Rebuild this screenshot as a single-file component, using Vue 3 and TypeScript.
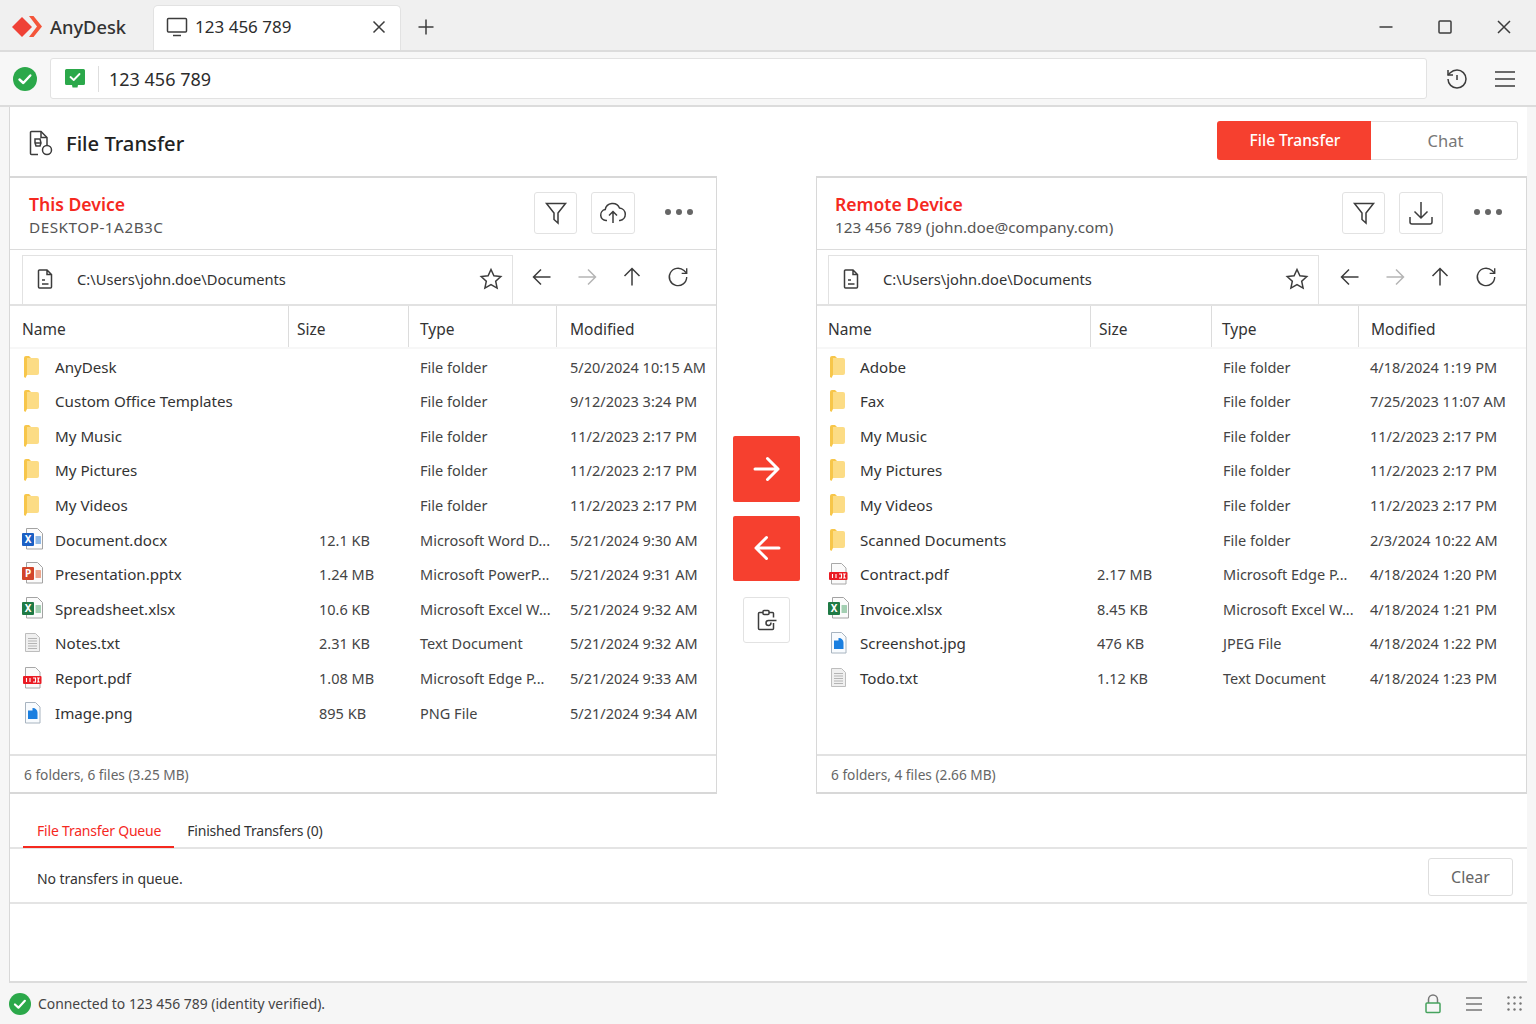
<script setup lang="ts">
type Kind = 'folder' | 'word' | 'ppt' | 'excel' | 'txt' | 'pdf' | 'image'

interface FileRow {
  name: string
  size: string
  type: string
  modified: string
  kind: Kind
}

interface Panel {
  id: string
  title: string
  sub: string
  action: 'upload' | 'download'
  summary: string
  rows: FileRow[]
}

const folder = (name: string, modified: string): FileRow => ({
  name,
  size: '',
  type: 'File folder',
  modified,
  kind: 'folder',
})

const panels: Panel[] = [
  {
    id: 'local',
    title: 'This Device',
    sub: 'DESKTOP-1A2B3C',
    action: 'upload',
    summary: '6 folders, 6 files (3.25 MB)',
    rows: [
      folder('AnyDesk', '5/20/2024 10:15 AM'),
      folder('Custom Office Templates', '9/12/2023 3:24 PM'),
      folder('My Music', '11/2/2023 2:17 PM'),
      folder('My Pictures', '11/2/2023 2:17 PM'),
      folder('My Videos', '11/2/2023 2:17 PM'),
      { name: 'Document.docx', size: '12.1 KB', type: 'Microsoft Word D...', modified: '5/21/2024 9:30 AM', kind: 'word' },
      { name: 'Presentation.pptx', size: '1.24 MB', type: 'Microsoft PowerP...', modified: '5/21/2024 9:31 AM', kind: 'ppt' },
      { name: 'Spreadsheet.xlsx', size: '10.6 KB', type: 'Microsoft Excel W...', modified: '5/21/2024 9:32 AM', kind: 'excel' },
      { name: 'Notes.txt', size: '2.31 KB', type: 'Text Document', modified: '5/21/2024 9:32 AM', kind: 'txt' },
      { name: 'Report.pdf', size: '1.08 MB', type: 'Microsoft Edge P...', modified: '5/21/2024 9:33 AM', kind: 'pdf' },
      { name: 'Image.png', size: '895 KB', type: 'PNG File', modified: '5/21/2024 9:34 AM', kind: 'image' },
    ],
  },
  {
    id: 'remote',
    title: 'Remote Device',
    sub: '123 456 789 (john.doe@company.com)',
    action: 'download',
    summary: '6 folders, 4 files (2.66 MB)',
    rows: [
      folder('Adobe', '4/18/2024 1:19 PM'),
      folder('Fax', '7/25/2023 11:07 AM'),
      folder('My Music', '11/2/2023 2:17 PM'),
      folder('My Pictures', '11/2/2023 2:17 PM'),
      folder('My Videos', '11/2/2023 2:17 PM'),
      folder('Scanned Documents', '2/3/2024 10:22 AM'),
      { name: 'Contract.pdf', size: '2.17 MB', type: 'Microsoft Edge P...', modified: '4/18/2024 1:20 PM', kind: 'pdf' },
      { name: 'Invoice.xlsx', size: '8.45 KB', type: 'Microsoft Excel W...', modified: '4/18/2024 1:21 PM', kind: 'excel' },
      { name: 'Screenshot.jpg', size: '476 KB', type: 'JPEG File', modified: '4/18/2024 1:22 PM', kind: 'image' },
      { name: 'Todo.txt', size: '1.12 KB', type: 'Text Document', modified: '4/18/2024 1:23 PM', kind: 'txt' },
    ],
  },
]

const officeColor: Record<string, string> = { word: '#1a5fc4', ppt: '#d2452a', excel: '#1f7a45' }
const officeTint: Record<string, string> = { word: '#8fb8e6', ppt: '#eda58c', excel: '#a3cfb2' }
const officeLetter: Record<string, string> = { word: 'X', ppt: 'P', excel: 'X' }
</script>

<template>
  <div class="app">
    <header class="titlebar">
      <svg class="logo" width="30" height="22" viewBox="0 0 30 22">
        <path d="M10 1l10 10-10 10L0 11z" fill="#ef4136" />
        <path d="M17 0h4.5L30 10.5 21.5 21H17l8-10.5z" fill="#f4553a" />
      </svg>
      <span class="brand">AnyDesk</span>
      <div class="tab">
        <svg class="line" width="22" height="22" viewBox="0 0 22 22">
          <rect x="1.5" y="2.5" width="19" height="13.5" rx="1" />
          <path d="M7 19.5h8" />
        </svg>
        <span class="tab-label">123 456 789</span>
        <svg class="line tab-close" width="14" height="14" viewBox="0 0 14 14">
          <path d="M1.5 1.5l11 11M12.5 1.5l-11 11" />
        </svg>
      </div>
      <svg class="line plus" width="18" height="18" viewBox="0 0 18 18">
        <path d="M9 1.5v15M1.5 9h15" />
      </svg>
      <div class="win-controls">
        <svg class="line" width="14" height="14" viewBox="0 0 14 14"><path d="M0.5 7h13" /></svg>
        <svg class="line" width="14" height="14" viewBox="0 0 14 14"><rect x="1" y="1" width="12" height="12" rx="1" /></svg>
        <svg class="line" width="14" height="14" viewBox="0 0 14 14"><path d="M1 1l12 12M13 1L1 13" /></svg>
      </div>
    </header>

    <div class="toolbar">
      <svg width="24" height="24" viewBox="0 0 24 24">
        <circle cx="12" cy="12" r="12" fill="#2ba84a" />
        <path d="M6.5 12.5l3.8 3.5 7-7.5" fill="none" stroke="#fff" stroke-width="2.4" stroke-linecap="round" stroke-linejoin="round" />
      </svg>
      <div class="address">
        <svg width="20" height="20" viewBox="0 0 20 20">
          <path d="M1.5 0h17A1.5 1.5 0 0 1 20 1.5v13a1.5 1.5 0 0 1-1.5 1.5H13l-.5 2.5h-5L7 16H1.5A1.5 1.5 0 0 1 0 14.5v-13A1.5 1.5 0 0 1 1.5 0z" fill="#2ba84a" />
          <path d="M5.5 8l3.2 3 5.8-6" fill="none" stroke="#fff" stroke-width="1.8" stroke-linecap="round" stroke-linejoin="round" />
        </svg>
        <span class="address-sep"></span>
        <span class="address-text">123 456 789</span>
      </div>
      <svg class="line history" width="24" height="24" viewBox="0 0 24 24">
        <path d="M3 12a9 9 0 1 0 9-9 9.75 9.75 0 0 0-6.74 2.74L3 8" />
        <path d="M3 3v5h5M12 8v5" />
      </svg>
      <svg class="line menu" width="20" height="18" viewBox="0 0 20 18">
        <path d="M0 2h20M0 9h20M0 16h20" />
      </svg>
    </div>

    <main class="main">
      <div class="main-head">
        <svg class="line head-icon" width="24" height="26" viewBox="0 0 24 26">
          <path d="M9 24.5H2.5a1 1 0 0 1-1-1v-21a1 1 0 0 1 1-1H12l6 6v8" />
          <path d="M12 1.5v6h6M6 9h5l1 4-1 3H7L6 13zM6 13h6" />
          <circle cx="18" cy="20" r="4.5" />
        </svg>
        <h1 class="title">File Transfer</h1>
        <div class="segment">
          <span class="seg seg-on">File Transfer</span>
          <span class="seg">Chat</span>
        </div>
      </div>

      <div class="panels">
        <template v-for="(panel, index) in panels" :key="panel.id">
          <section class="panel" :class="panel.id">
            <div class="panel-head">
              <div class="device">
                <div class="device-title">{{ panel.title }}</div>
                <div class="device-sub">{{ panel.sub }}</div>
              </div>
              <button class="square">
                <svg class="line" width="24" height="24" viewBox="0 0 24 24">
                  <path d="M2.5 2.5h19L14 12v10l-4-3.5V12z" />
                </svg>
              </button>
              <button class="square action">
                <svg v-if="panel.action === 'upload'" class="line" width="28" height="26" viewBox="0 0 28 26">
                  <path d="M8 20.5H7a5.5 5.5 0 0 1-.8-10.9A7.5 7.5 0 0 1 20.5 8a6.3 6.3 0 0 1 .5 12.5h-1" />
                  <path d="M14 23V12M10 15.5l4-4 4 4" />
                </svg>
                <svg v-else class="line" width="26" height="26" viewBox="0 0 26 26">
                  <path d="M2 17v5a2 2 0 0 0 2 2h18a2 2 0 0 0 2-2v-5M13 2v16M6.5 11.5L13 18l6.5-6.5" />
                </svg>
              </button>
              <div class="dots"><i></i><i></i><i></i></div>
            </div>

            <div class="path-row">
              <div class="path-box">
                <svg class="line path-icon" width="16" height="20" viewBox="0 0 16 20">
                  <path d="M10 1H2.5a1 1 0 0 0-1 1v16a1 1 0 0 0 1 1h11a1 1 0 0 0 1-1V5.5zM10 1v4.5h4.5M5 11h3M5 15h6.5" />
                </svg>
                <span class="path-text">C:\Users\john.doe\Documents</span>
                <svg class="line star" width="24" height="24" viewBox="0 0 24 24">
                  <path d="M12 2.5l2.9 6.3 6.9.8-5.1 4.7 1.4 6.8L12 17.7l-6.1 3.4 1.4-6.8-5.1-4.7 6.9-.8z" />
                </svg>
              </div>
              <div class="nav">
                <svg class="line" width="20" height="20" viewBox="0 0 20 20"><path d="M18.5 10h-17M9 2.5L1.5 10 9 17.5" /></svg>
                <svg class="line faded" width="20" height="20" viewBox="0 0 20 20"><path d="M1.5 10h17M11 2.5l7.5 7.5-7.5 7.5" /></svg>
                <svg class="line" width="20" height="20" viewBox="0 0 20 20"><path d="M10 18.5v-17M2.5 9L10 1.5 17.5 9" /></svg>
                <svg class="line" width="22" height="22" viewBox="0 0 24 24">
                  <path d="M21.5 12a9.5 9.5 0 1 1-3-7l3 2.8" />
                  <path d="M21.5 2.5V8H16" />
                </svg>
              </div>
            </div>

            <div class="grid-row col-head">
              <span>Name</span>
              <span class="cell-size">Size</span>
              <span class="cell-type">Type</span>
              <span class="cell-mod">Modified</span>
            </div>

            <div class="list">
              <div v-for="row in panel.rows" :key="row.name" class="grid-row file-row">
                <span class="file-name">
                  <svg class="file-icon" width="22" height="24" viewBox="0 0 22 24">
                    <template v-if="row.kind === 'folder'">
                      <path d="M2 3a2 2 0 0 1 2-2h3l2 2H5v17l-1.5 3L2 22z" fill="#f7c64a" />
                      <path d="M5 3h10a2 2 0 0 1 2 2v13a2 2 0 0 1-2 2H5z" fill="#fcdc85" />
                    </template>
                    <template v-else-if="row.kind === 'txt'">
                      <path d="M3.5 2.5h10l4 4v14h-14z" fill="#f0f0f0" stroke="#bdbdbd" />
                      <path d="M6 7.5h9M6 10h9M6 12.5h9M6 15h9M6 17.5h9" stroke="#b4b4b4" stroke-width="1" />
                    </template>
                    <template v-else-if="row.kind === 'pdf'">
                      <path d="M3.5 1.5h10L18 6v16H3.5z" fill="#fafafa" stroke="#a8a8a8" />
                      <rect x="1" y="10" width="18.5" height="8" rx="1" fill="#ea1c24" />
                      <path d="M4.5 12v4M8 12v4M11 12h2.5v4H11M15 12h2l-1 2 1 2h-2" stroke="#fff" stroke-width="1.1" fill="none" />
                    </template>
                    <template v-else-if="row.kind === 'image'">
                      <path d="M3.5 1.5h10L18 6v16H3.5z" fill="#f8fbfe" stroke="#a8b4c0" />
                      <path d="M6 9.5h4.5V7a4.5 4.5 0 0 1 5 4.5V18H6z" fill="#1a7fe0" />
                    </template>
                    <template v-else>
                      <path d="M4.5.5h11l5 5V21h-16z" fill="#fbfbfb" stroke="#a3a3a3" />
                      <rect x="13.5" y="8" width="5.5" height="8" rx=".5" :fill="officeTint[row.kind]" />
                      <rect x="0" y="5" width="12" height="13" rx="1" :fill="officeColor[row.kind]" />
                      <text x="6" y="15" class="office-letter">{{ officeLetter[row.kind] }}</text>
                    </template>
                  </svg>
                  {{ row.name }}
                </span>
                <span class="cell-size">{{ row.size }}</span>
                <span class="cell-type">{{ row.type }}</span>
                <span class="cell-mod">{{ row.modified }}</span>
              </div>
            </div>

            <div class="panel-foot">{{ panel.summary }}</div>
          </section>

          <div v-if="index === 0" class="transfer">
            <button class="send">
              <svg class="arrow" width="28" height="28" viewBox="0 0 28 28"><path d="M2 14h23M14.5 3.5L25 14 14.5 24.5" /></svg>
            </button>
            <button class="send">
              <svg class="arrow" width="28" height="28" viewBox="0 0 28 28"><path d="M26 14H3M13.5 3.5L3 14l10.5 10.5" /></svg>
            </button>
            <button class="square clip">
              <svg class="line" width="20" height="22" viewBox="0 0 20 22">
                <path d="M6 3.5H2.5a1 1 0 0 0-1 1v15a1 1 0 0 0 1 1h13a1 1 0 0 0 1-1V14M16.5 8.5v-4a1 1 0 0 0-1-1H12" />
                <rect x="6" y="1.5" width="6" height="4" rx="1" />
                <path d="M19.5 11.5h-8a2.5 2.5 0 0 0 0 5c2 0 2.5-2 2.5-3" />
              </svg>
            </button>
          </div>
        </template>
      </div>

      <nav class="queue-tabs">
        <span class="queue-tab queue-tab-on">File Transfer Queue</span>
        <span class="queue-tab">Finished Transfers (0)</span>
      </nav>
      <div class="queue-row">
        <span class="queue-empty">No transfers in queue.</span>
        <button class="clear">Clear</button>
      </div>
    </main>

    <footer class="status">
      <svg width="22" height="22" viewBox="0 0 24 24">
        <circle cx="12" cy="12" r="12" fill="#2ba84a" />
        <path d="M6.5 12.5l3.8 3.5 7-7.5" fill="none" stroke="#fff" stroke-width="2.4" stroke-linecap="round" stroke-linejoin="round" />
      </svg>
      <span class="status-text">Connected to 123 456 789 (identity verified).</span>
      <div class="status-icons">
        <svg width="16" height="20" viewBox="0 0 16 20" fill="none">
          <path d="M3.5 9V5.5a4.5 4.5 0 0 1 9 0V9" stroke="#777" stroke-width="1.5" />
          <rect x="1" y="9" width="14" height="9.5" rx="1" stroke="#46a35e" stroke-width="1.5" />
        </svg>
        <svg width="16" height="16" viewBox="0 0 16 16"><path d="M0 2h16M0 8h16M0 14h16" stroke="#777" stroke-width="1.5" /></svg>
        <svg width="15" height="15" viewBox="0 0 15 15" fill="#777">
          <circle cx="1.5" cy="1.5" r="1.2" /><circle cx="7.5" cy="1.5" r="1.2" /><circle cx="13.5" cy="1.5" r="1.2" />
          <circle cx="1.5" cy="7.5" r="1.2" /><circle cx="7.5" cy="7.5" r="1.2" /><circle cx="13.5" cy="7.5" r="1.2" />
          <circle cx="1.5" cy="13.5" r="1.2" /><circle cx="7.5" cy="13.5" r="1.2" /><circle cx="13.5" cy="13.5" r="1.2" />
        </svg>
      </div>
    </footer>
  </div>
</template>

<style scoped>
.app {
  width: 1536px;
  height: 1024px;
  display: flex;
  flex-direction: column;
  overflow: hidden;
  background: #f6f6f6;
  color: #2c2c2c;
  font-family: "Noto Sans", "Open Sans", sans-serif;
  font-size: 15px;
}

button {
  font-family: inherit;
  padding: 0;
  cursor: pointer;
}

svg {
  display: block;
  flex: none;
}

.line {
  fill: none;
  stroke: #3c3c3c;
  stroke-width: 1.5;
}

.titlebar {
  height: 52px;
  flex: none;
  display: flex;
  align-items: flex-end;
  box-sizing: border-box;
  padding-top: 4px;
  padding-left: 12px;
  background: #f0f0f0;
  border-bottom: 2px solid #dcdcdc;
}

.logo {
  align-self: center;
}

.brand {
  align-self: center;
  margin-left: 8px;
  margin-bottom: 1px;
  font-size: 18.3px;
  font-weight: 500;
  color: #333;
}

.tab {
  width: 248px;
  height: 45px;
  margin-left: 27px;
  display: flex;
  align-items: center;
  box-sizing: border-box;
  padding: 0 14px 3px 12px;
  background: #fff;
  border: 1px solid #e2e2e2;
  border-bottom: none;
  border-radius: 5px 5px 0 0;
}

.tab-label {
  margin-left: 7px;
  font-size: 17px;
}

.tab-close {
  margin-left: auto;
}

.plus {
  align-self: center;
  margin-left: 16px;
}

.win-controls {
  align-self: center;
  margin-left: auto;
  margin-right: 25px;
  margin-bottom: 1px;
  display: flex;
  gap: 45px;
}

.toolbar {
  height: 55px;
  flex: none;
  display: flex;
  align-items: center;
  box-sizing: border-box;
  padding-left: 13px;
  background: #f7f7f7;
  border-bottom: 2px solid #dcdcdc;
}

.address {
  width: 1377px;
  height: 41px;
  margin-left: 13px;
  display: flex;
  align-items: center;
  box-sizing: border-box;
  padding-left: 14px;
  background: #fff;
  border: 1px solid #e2e2e2;
  border-radius: 3px;
}

.address-sep {
  width: 1px;
  height: 26px;
  margin: 0 10px 0 13px;
  background: #dedede;
}

.address-text {
  font-size: 18px;
}

.history {
  margin-left: 18px;
}

.menu {
  margin-left: 26px;
}

.main {
  flex: 1;
  min-height: 0;
  width: 1518px;
  margin-left: 9px;
  display: flex;
  flex-direction: column;
  box-sizing: border-box;
  background: #fff;
  border-left: 1px solid #d8d8d8;
  border-bottom: 2px solid #dcdcdc;
}

.main-head {
  height: 69px;
  flex: none;
  display: flex;
  align-items: center;
  padding: 0 9px 0 19px;
}

.head-icon {
  margin-top: 2px;
}

.title {
  margin: 3px 0 0 13px;
  font-size: 20.2px;
  font-weight: 500;
  color: #222;
}

.segment {
  margin-left: auto;
  margin-bottom: 3px;
  display: flex;
  height: 39px;
}

.seg {
  width: 147px;
  display: flex;
  align-items: center;
  justify-content: center;
  box-sizing: border-box;
  padding-left: 3px;
  font-size: 16.5px;
  color: #777;
  border: 1px solid #e2e2e2;
  border-left: none;
  border-radius: 0 3px 3px 0;
}

.seg-on {
  width: 154px;
  padding-left: 2px;
  font-size: 15.5px;
  color: #fff;
  font-weight: 500;
  background: #f6402f;
  border: none;
  border-radius: 3px 0 0 3px;
}

.panels {
  height: 618px;
  flex: none;
  display: flex;
  margin-left: -1px;
}

.panel {
  display: flex;
  flex-direction: column;
  box-sizing: border-box;
  border: 1px solid #d8d8d8;
  border-width: 2px 1px 2px 1px;
}

.local {
  width: 708px;
  --name-col: 266px;
  --size-col: 120px;
  --type-col: 148px;
  --left: 12px;
  --head-left: 19px;
  --head-size: 8px;
  --head-type: 11px;
  --head-mod: 13px;
  --size-pad: 31px;
  --type-pad: 12px;
  --mod-pad: 14px;
  --nav-gap: 6px;
  --name-gap: 11px;
  --right: 23px;
  --dots-gap: 30px;
}

.remote {
  width: 711px;
  --name-col: 262px;
  --size-col: 121px;
  --type-col: 147px;
  --left: 11px;
  --head-left: 18px;
  --head-size: 8px;
  --head-type: 10px;
  --head-mod: 12px;
  --size-pad: 7px;
  --type-pad: 12px;
  --mod-pad: 12px;
  --nav-gap: 8px;
  --name-gap: 10px;
  --right: 24px;
  --dots-gap: 31px;
}

.panel-head {
  height: 71px;
  flex: none;
  display: flex;
  align-items: center;
  padding: 0 var(--right) 0 var(--head-left);
  border-bottom: 1px solid #dcdcdc;
}

.device {
  margin-right: auto;
  padding-top: 3px;
}

.device-title {
  font-size: 17.6px;
  font-weight: 600;
  line-height: 24px;
  color: #f5291f;
}

.device-sub {
  font-size: 15.3px;
  line-height: 22px;
  color: #555;
}

.local .device-sub {
  letter-spacing: 0.5px;
}

.square {
  width: 43px;
  height: 42px;
  display: flex;
  align-items: center;
  justify-content: center;
  background: #fff;
  border: 1px solid #e2e2e2;
  border-radius: 3px;
}

.panel-head .square {
  margin-bottom: 2px;
}

.action {
  width: 44px;
  margin-left: 14px;
}

.dots {
  width: 28px;
  margin-left: var(--dots-gap);
  margin-bottom: 3px;
  display: flex;
  justify-content: space-between;
}

.dots i {
  width: 6px;
  height: 6px;
  border-radius: 50%;
  background: #666;
}

.path-row {
  height: 54px;
  flex: none;
  display: flex;
  align-items: flex-end;
  padding-left: var(--left);
  border-bottom: 2px solid #e2e2e2;
}

.path-box {
  width: 491px;
  height: 49px;
  display: flex;
  align-items: center;
  box-sizing: border-box;
  padding: 0 9px 2px 14px;
  border: 1px solid #e2e2e2;
  border-bottom: none;
}

.path-text {
  margin-left: 24px;
  font-size: 14.7px;
  color: #333;
}

.star {
  margin-left: auto;
}

.nav {
  align-self: center;
  display: flex;
  gap: 25px;
  align-items: center;
  margin-left: calc(var(--nav-gap) + 13px);
}

.faded {
  stroke: #b5b5b5;
}

.grid-row {
  display: grid;
  grid-template-columns: var(--name-col) var(--size-col) var(--type-col) 1fr;
  align-items: center;
  padding-left: var(--left);
  white-space: nowrap;
}

.col-head {
  height: 41px;
  flex: none;
  font-size: 15.5px;
  color: #333;
  border-bottom: 2px solid #f7f7f7;
}

.col-head span {
  height: 100%;
  display: flex;
  align-items: center;
  padding-top: 4px;
  box-sizing: border-box;
}

.col-head .cell-size,
.col-head .cell-type,
.col-head .cell-mod {
  border-left: 1px solid #dcdcdc;
}

.col-head .cell-size {
  padding-left: var(--head-size);
}

.col-head .cell-type {
  padding-left: var(--head-type);
}

.col-head .cell-mod {
  padding-left: var(--head-mod);
}

.list {
  flex: 1;
  padding-top: 0.4px;
}

.file-row {
  height: 34.6px;
  font-size: 14.5px;
  color: #444;
}

.file-row .cell-size {
  padding-left: var(--size-pad);
}

.file-row .cell-type {
  padding-left: var(--type-pad);
}

.file-row .cell-mod {
  padding-left: var(--mod-pad);
}

.file-name {
  display: flex;
  align-items: center;
  gap: var(--name-gap);
  font-size: 15.15px;
  color: #333;
}

.office-letter {
  font-size: 10px;
  font-weight: 700;
  fill: #fff;
  text-anchor: middle;
}

.panel-foot {
  height: 36px;
  flex: none;
  display: flex;
  align-items: center;
  padding-left: 14px;
  font-size: 13.7px;
  color: #666;
  border-top: 2px solid #e2e2e2;
}

.transfer {
  width: 99px;
  flex: none;
  display: flex;
  flex-direction: column;
  align-items: center;
  padding-top: 260px;
  box-sizing: border-box;
}

.send {
  width: 67px;
  height: 65.5px;
  margin-bottom: 14px;
  display: flex;
  align-items: center;
  justify-content: center;
  background: #f6402f;
  border: none;
  border-radius: 2px;
}

.arrow {
  fill: none;
  stroke: #fff;
  stroke-width: 3;
  stroke-linecap: round;
  stroke-linejoin: round;
}

.clip {
  width: 47px;
  height: 46px;
  margin-top: 2px;
}

.queue-tabs {
  height: 53px;
  flex: none;
  display: flex;
  align-items: flex-end;
  padding-left: 13px;
  border-bottom: 2px solid #e4e4e4;
}

.queue-tab {
  height: 37px;
  margin-bottom: -1px;
  box-sizing: border-box;
  padding: 2px 13px 0;
  font-size: 14px;
  letter-spacing: -0.2px;
  line-height: 36px;
  color: #333;
}

.queue-tab-on {
  padding-left: 14px;
  color: #f5291f;
  border-bottom: 2px solid #f5291f;
}

.queue-row {
  height: 50px;
  flex: none;
  display: flex;
  align-items: center;
  justify-content: space-between;
  padding: 3px 14px 0 27px;
  font-size: 14px;
  color: #333;
  border-bottom: 2px solid #e4e4e4;
}

.queue-empty {
  margin-top: 2px;
  letter-spacing: -0.05px;
}

.clear {
  width: 85px;
  height: 38px;
  font-size: 16px;
  color: #666;
  background: #fff;
  border: 1px solid #dedede;
  border-radius: 3px;
}

.status {
  height: 41px;
  flex: none;
  display: flex;
  align-items: center;
  padding-left: 9px;
  background: #f6f6f6;
}

.status-text {
  margin-left: 7px;
  font-size: 13.9px;
  color: #444;
}

.status-icons {
  margin-left: auto;
  margin-right: 14px;
  display: flex;
  align-items: center;
  gap: 25px;
}
</style>
